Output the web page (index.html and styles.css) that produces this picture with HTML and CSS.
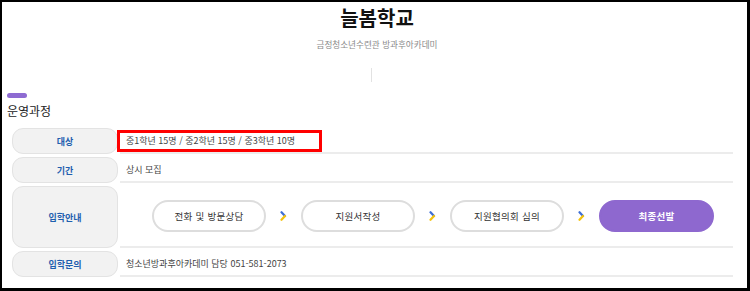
FILE: index.html
```html
<!DOCTYPE html>
<html lang="ko">

<head>
    <meta charset="UTF-8">
    <meta name="viewport" content="width=device-width, initial-scale=1.0">
    <title>늘봄학교</title>
    <link rel="stylesheet" href="styles.css">
</head>

<body>
    <div class="page">
        <div class="intro">
            <h1 class="title">늘봄학교</h1>
            <p class="subtitle">금정청소년수련관 방과후아카데미</p>
            <span class="divider"></span>
        </div>

        <div class="course">
            <span class="courseMark"></span>
            <h2 class="courseTitle">운영과정</h2>

            <div class="info">
                <div class="row">
                    <div class="label">대상</div>
                    <div class="value"><span class="highlight">중1학년 15명 / 중2학년 15명 / 중3학년 10명</span></div>
                </div>
                <div class="row">
                    <div class="label">기간</div>
                    <div class="value">상시 모집</div>
                </div>
                <div class="row tall">
                    <div class="label">입학안내</div>
                    <div class="value steps">
                        <span class="step">전화 및 방문상담</span>
                        <svg class="arrow" width="7" height="10" viewBox="0 0 7 10">
                            <path d="M1.5 1.2 L5 5" stroke="#3f6fd6" stroke-width="2.2" stroke-linecap="round" fill="none" />
                            <path d="M5 5 L1.5 8.8" stroke="#f4c20d" stroke-width="2.2" stroke-linecap="round" fill="none" />
                        </svg>
                        <span class="step">지원서작성</span>
                        <svg class="arrow" width="7" height="10" viewBox="0 0 7 10">
                            <path d="M1.5 1.2 L5 5" stroke="#3f6fd6" stroke-width="2.2" stroke-linecap="round" fill="none" />
                            <path d="M5 5 L1.5 8.8" stroke="#f4c20d" stroke-width="2.2" stroke-linecap="round" fill="none" />
                        </svg>
                        <span class="step">지원협의회 심의</span>
                        <svg class="arrow" width="7" height="10" viewBox="0 0 7 10">
                            <path d="M1.5 1.2 L5 5" stroke="#3f6fd6" stroke-width="2.2" stroke-linecap="round" fill="none" />
                            <path d="M5 5 L1.5 8.8" stroke="#f4c20d" stroke-width="2.2" stroke-linecap="round" fill="none" />
                        </svg>
                        <span class="step final">최종선발</span>
                    </div>
                </div>
                <div class="row">
                    <div class="label">입학문의</div>
                    <div class="value">청소년방과후아카데미 담당 051-581-2073</div>
                </div>
            </div>
        </div>
    </div>
</body>

</html>
```

FILE: styles.css
```css
body {
    margin: 0px;
    padding: 0px;
    background-color: white;
    font-family: "Noto Sans CJK KR", "Noto Sans", sans-serif;
    color: #333;

    .page {
        box-sizing: border-box;
        height: 291px;
        border: 2px solid black;
        border-right-width: 3px;
        border-bottom-width: 3px;
        padding: 4px 0px 0px 5px;
    }

    .intro {
        display: flex;
        flex-direction: column;
        align-items: center;

        .title {
            margin: 0px;
            font-size: 20px;
            line-height: 24px;
            font-weight: bold;
            color: #111;
        }

        .subtitle {
            margin: 8px 0px 0px 0px;
            font-size: 8.6px;
            line-height: 12px;
            color: #8a8a8a;
        }

        .divider {
            margin-top: 18px;
            margin-right: 11px;
            width: 1px;
            height: 14px;
            background-color: #e2e2e2;
        }
    }

    .course {
        .courseMark {
            display: block;
            margin-top: 11px;
            width: 20px;
            height: 5px;
            border-radius: 3px;
            background-color: #8e6bd2;
        }

        .courseTitle {
            margin: 5px 0px 0px 0px;
            font-size: 12px;
            line-height: 16px;
            font-weight: normal;
            color: #222;
        }
    }

    .info {
        margin: 9px 14px 0px 5px;
        display: flex;
        flex-direction: column;
        gap: 3px;

        .row {
            display: flex;
            gap: 2px;
            height: 26px;
        }

        .row.tall {
            height: 62px;
        }

        .label {
            box-sizing: border-box;
            width: 106px;
            flex-shrink: 0;
            display: flex;
            align-items: center;
            justify-content: center;
            background-color: #f2f2f2;
            border: 1px solid #e3e3e3;
            border-radius: 11px;
            font-size: 9px;
            font-weight: bold;
            color: #1f5faf;
        }

        .value {
            flex: 1;
            display: flex;
            align-items: center;
            padding-left: 6px;
            border-bottom: 2px solid #ececec;
            font-size: 9px;
            color: #444;
        }

        .highlight {
            margin-left: -9px;
            margin-top: 1px;
            padding: 0px 24px 0px 6px;
            line-height: 16px;
            border: 3px solid #f00;
        }

        .steps {
            padding-left: 32px;
            gap: 13px;
        }

        .step {
            box-sizing: border-box;
            width: 114px;
            height: 32px;
            display: flex;
            align-items: center;
            justify-content: center;
            border: 2px solid #dddddd;
            border-radius: 16px;
            background-color: white;
            font-size: 9.5px;
            letter-spacing: 0.3px;
            color: #333;
        }

        .step.final {
            width: 115px;
            border-color: #8e68cf;
            background-color: #8e68cf;
            color: white;
            font-weight: bold;
        }

        .arrow {
            margin: 0px 1px;
        }
    }
}
```
